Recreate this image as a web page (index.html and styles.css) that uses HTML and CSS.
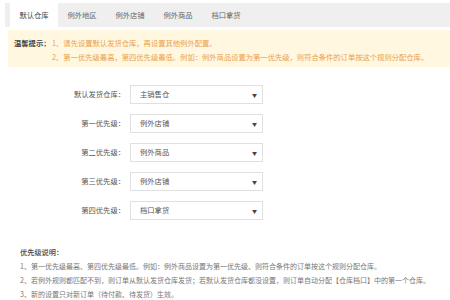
FILE: index.html
```html
<!DOCTYPE html>
<html lang="zh">
<head>
<meta charset="utf-8">
<link rel="stylesheet" href="styles.css">
</head>
<body>
<div class="tabs">
  <div class="tab active">默认仓库</div>
  <div class="tab">例外地区</div>
  <div class="tab">例外店铺</div>
  <div class="tab">例外商品</div>
  <div class="tab">档口拿货</div>
</div>
<div class="tip">
  <div class="tip-label">温馨提示：</div>
  <div class="tip-list">
    <div>1、请先设置默认发货仓库，再设置其他例外配置。</div>
    <div>2、第一优先级最高，第四优先级最低。例如：例外商品设置为第一优先级，则符合条件的订单按这个规则分配仓库。</div>
  </div>
</div>
<div class="form">
  <div class="label">默认发货仓库：</div><div class="select">主销售仓<span class="arrow">▼</span></div>
  <div class="label">第一优先级：</div><div class="select">例外店铺<span class="arrow">▼</span></div>
  <div class="label">第二优先级：</div><div class="select">例外商品<span class="arrow">▼</span></div>
  <div class="label">第三优先级：</div><div class="select">例外店铺<span class="arrow">▼</span></div>
  <div class="label">第四优先级：</div><div class="select">档口拿货<span class="arrow">▼</span></div>
</div>
<div class="notes">
  <div class="notes-title">优先级说明：</div>
  <div>1、第一优先级最高、第四优先级最低。例如：例外商品设置为第一优先级、则符合条件的订单按这个规则分配仓库。</div>
  <div>2、若例外规则都匹配不到，则订单从默认发货仓库发货；若默认发货仓库都没设置，则订单自动分配【仓库档口】中的第一个仓库。</div>
  <div>3、新的设置只对新订单（待付款、待发货）生效。</div>
</div>
</body>
</html>
```

FILE: styles.css
```css
* { box-sizing: border-box; }
html, body { margin: 0; padding: 0; background: #fff; overflow: hidden; }
body {
  width: 450px;
  height: 300px;
  font-family: "Noto Sans CJK SC", "Noto Sans", sans-serif;
  color: #555;
}
.tabs {
  display: flex;
  margin: 3px 0 0 5px;
  padding-left: 5px;
  height: 24px;
  background: #efefef;
}
.tab {
  width: 48px;
  line-height: 24px;
  font-size: 7.3px;
  text-align: center;
  color: #666;
}
.tab.active { background: #fff; color: #444; }
.tip {
  display: flex;
  margin: 3px 0 0 8px;
  padding: 6px 0 3px 6px;
  background: #fff7e0;
  font-size: 7.3px;
  line-height: 14px;
  white-space: nowrap;
}
.tip-label { font-weight: bold; color: #444; width: 38px; }
.tip-list { color: #e9a24e; }
.form {
  display: grid;
  grid-template-columns: 125px 133px;
  column-gap: 5px;
  row-gap: 10px;
  margin-top: 18px;
  font-size: 7.3px;
}
.label {
  text-align: right;
  line-height: 19px;
  color: #555;
}
.select {
  position: relative;
  height: 19px;
  line-height: 17px;
  border: 1px solid #e0e0e0;
  padding-left: 9px;
  color: #555;
}
.arrow {
  position: absolute;
  right: 5px;
  top: 0;
  font-size: 5px;
  color: #444;
}
.notes {
  margin-top: 25px;
  padding-left: 20px;
  font-size: 7px;
  line-height: 14px;
  color: #777;
  white-space: nowrap;
}
.notes-title { color: #444; font-size: 7.2px; font-weight: 500; }
```
